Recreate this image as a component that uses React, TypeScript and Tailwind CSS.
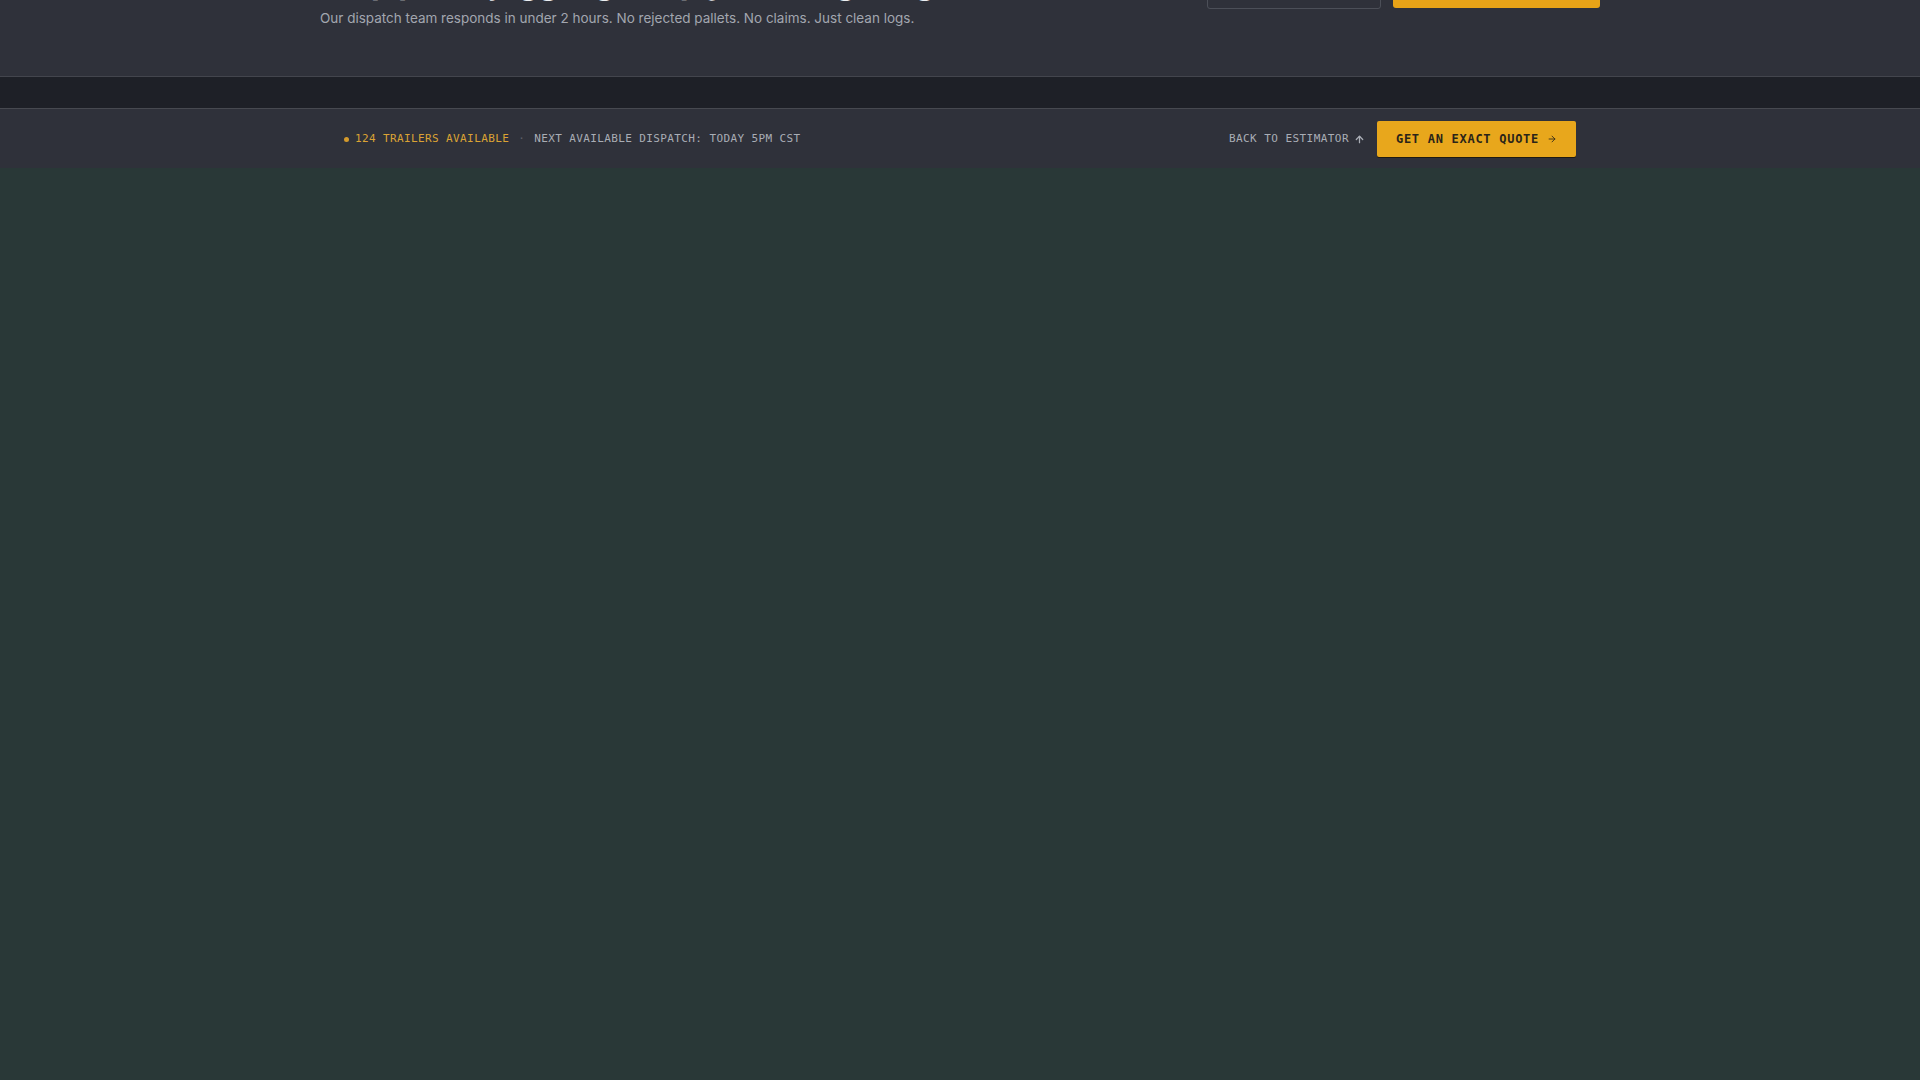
import { ArrowRight, ArrowUp } from "lucide-react";

const mono = { fontFamily: '"DejaVu Sans Mono", "Liberation Mono", monospace' };
const sans = { fontFamily: 'Inter, "Noto Sans", sans-serif' };

function DispatchCta() {
  return (
    <section className="h-[77px] overflow-hidden bg-[#2f313a] border-b border-[#43454d]">
      <div className="mx-auto flex h-full w-[1280px] items-end justify-between pb-[48px]">
        <div style={sans}>
          <h2 className="mb-[6px] text-[32px] font-bold leading-[1.2] tracking-[-0.01em] text-[#eceef2]">
            Stop pallet juggling. Ship your freight right.
          </h2>
          <p className="text-[13.5px] leading-[20px] text-[#a2a6af]">
            Our dispatch team responds in under 2 hours. No rejected pallets. No claims. Just clean logs.
          </p>
        </div>
        <div className="mb-[19px] flex items-end gap-3">
          <input
            className="h-[46px] w-[174px] rounded-[3px] border border-[#4c4f58] bg-transparent px-3 text-sm text-[#d0d3da] outline-none"
            style={sans}
            placeholder=""
          />
          <button className="mb-px h-[45px] w-[207px] rounded-[3px] bg-[#e8a317]" />
        </div>
      </div>
    </section>
  );
}

function StatusBar() {
  return (
    <div className="bg-[#2f313a]">
      <div className="mx-auto flex h-[59px] w-[1280px] items-center justify-between px-6 pt-[2px]">
        <div className="flex items-center text-[11px] tracking-[0.035em]" style={mono}>
          <span className="mr-[6px] h-[5px] w-[5px] rounded-full bg-[#d49a2c]" />
          <span className="text-[#dba334]">124 TRAILERS AVAILABLE</span>
          <span className="mx-[9px] text-[#5d6069]">·</span>
          <span className="text-[#a9adb5]">NEXT AVAILABLE DISPATCH: TODAY 5PM CST</span>
        </div>
        <div className="flex items-center gap-3" style={mono}>
          <a className="flex items-center gap-[5px] text-[11px] tracking-[0.04em] text-[#a9adb5]">
            BACK TO ESTIMATOR
            <ArrowUp size={11} strokeWidth={2.75} />
          </a>
          <button className="mb-[2px] flex h-[36px] w-[199px] items-center justify-center gap-2 rounded-[2px] bg-[#e8a71c] text-[12px] font-bold tracking-[0.06em] text-[#2a2419] shadow-[0_1px_0_#1f1a12]">
            GET AN EXACT QUOTE
            <ArrowRight size={10} strokeWidth={2} />
          </button>
        </div>
      </div>
    </div>
  );
}

export default function App() {
  return (
    <div className="min-h-screen bg-[#293837]">
      <DispatchCta />
      <div className="h-[32px] bg-[#1e2027] border-b border-[#474950]" />
      <StatusBar />
    </div>
  );
}
